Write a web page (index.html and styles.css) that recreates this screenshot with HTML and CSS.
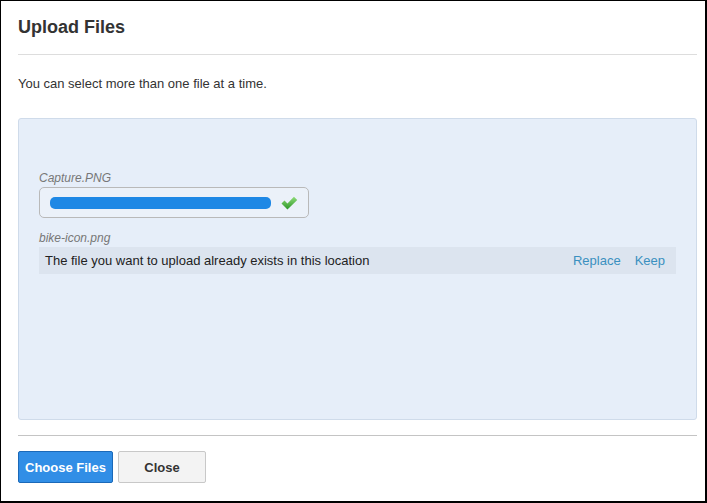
FILE: index.html
```html
<!DOCTYPE html>
<html>
<head>
<meta charset="utf-8">
<link rel="stylesheet" href="styles.css">
</head>
<body>
<div class="dialog">
  <h1 class="title">Upload Files</h1>
  <div class="rule"></div>
  <p class="hint">You can select more than one file at a time.</p>
  <div class="dropzone">
    <div class="file">
      <div class="fname">Capture.PNG</div>
      <div class="progress">
        <div class="bar"></div>
        <svg class="check" width="17" height="14" viewBox="0 0 17 14">
          <defs>
            <linearGradient id="g" x1="0" y1="0" x2="0" y2="1">
              <stop offset="0" stop-color="#8fdc78"/>
              <stop offset="1" stop-color="#2b9627"/>
            </linearGradient>
          </defs>
          <path d="M0.5 7.5 L3.5 4.5 L6.5 7.5 L13 0.8 L16.3 4 L6.5 13.5 Z" fill="url(#g)"/>
        </svg>
      </div>
    </div>
    <div class="file">
      <div class="fname">bike-icon.png</div>
      <div class="conflict">
        <span class="msg">The file you want to upload already exists in this location</span>
        <span class="actions"><a class="link">Replace</a><a class="link">Keep</a></span>
      </div>
    </div>
  </div>
  <div class="rule bottom"></div>
  <div class="buttons">
    <button class="btn primary">Choose Files</button>
    <button class="btn">Close</button>
  </div>
</div>
</body>
</html>
```
FILE: styles.css
```css
html, body {
  margin: 0;
  padding: 0;
  background: #fff;
}
body {
  font-family: "Liberation Sans", Arial, sans-serif;
  color: #333;
}
.dialog {
  box-sizing: border-box;
  width: 707px;
  height: 503px;
  border: 1px solid #000;
  border-right-width: 2px;
  border-bottom-width: 2px;
  padding: 0 8px 0 17px;
}
.title {
  margin: 0;
  padding-top: 16px;
  height: 53px;
  box-sizing: border-box;
  font-size: 18px;
  font-weight: bold;
  line-height: 21px;
  color: #333;
}
.rule {
  height: 1px;
  background: #ddd;
}
.hint {
  margin: 0;
  padding-top: 21px;
  height: 63px;
  box-sizing: border-box;
  font-size: 13px;
  line-height: 15px;
  color: #333;
}
.dropzone {
  box-sizing: border-box;
  height: 302px;
  background: #e6eef9;
  border: 1px solid #cfdbea;
  border-radius: 3px;
  padding: 52px 20px 0 20px;
}
.file {
  margin-bottom: 13px;
}
.fname {
  font-size: 12px;
  font-style: italic;
  color: #777;
  line-height: 14px;
  margin-bottom: 2px;
}
.progress {
  box-sizing: border-box;
  width: 270px;
  height: 31px;
  border: 1px solid #b9b9b9;
  border-radius: 5px;
  display: flex;
  align-items: center;
  padding: 0 10px 0 10px;
  gap: 10px;
  background: #ebf1f9;
}
.bar {
  width: 222px;
  height: 12px;
  background: #1e88e5;
  border-radius: 5px;
}
.check {
  display: block;
}
.conflict {
  display: flex;
  justify-content: space-between;
  align-items: center;
  height: 27px;
  background: #dce4ef;
  padding: 0 11px 0 6px;
  font-size: 13px;
  color: #222;
}
.actions {
  display: flex;
  gap: 14px;
}
.link {
  color: #3a90c0;
  cursor: pointer;
}
.rule.bottom {
  margin-top: 15px;
  background: #c4c4c4;
}
.buttons {
  display: flex;
  gap: 5px;
  padding-top: 15px;
}
.btn {
  box-sizing: border-box;
  height: 32px;
  padding: 0 10px;
  font-family: "Liberation Sans", Arial, sans-serif;
  font-size: 13px;
  font-weight: bold;
  color: #333;
  background: #f3f3f3;
  border: 1px solid #c8c8c8;
  border-radius: 2px;
  width: 88px;
}
.btn.primary {
  width: 95px;
  background: #318ee6;
  border-color: #1b69b8;
  color: #fff;
  padding: 0 6px;
}
```
